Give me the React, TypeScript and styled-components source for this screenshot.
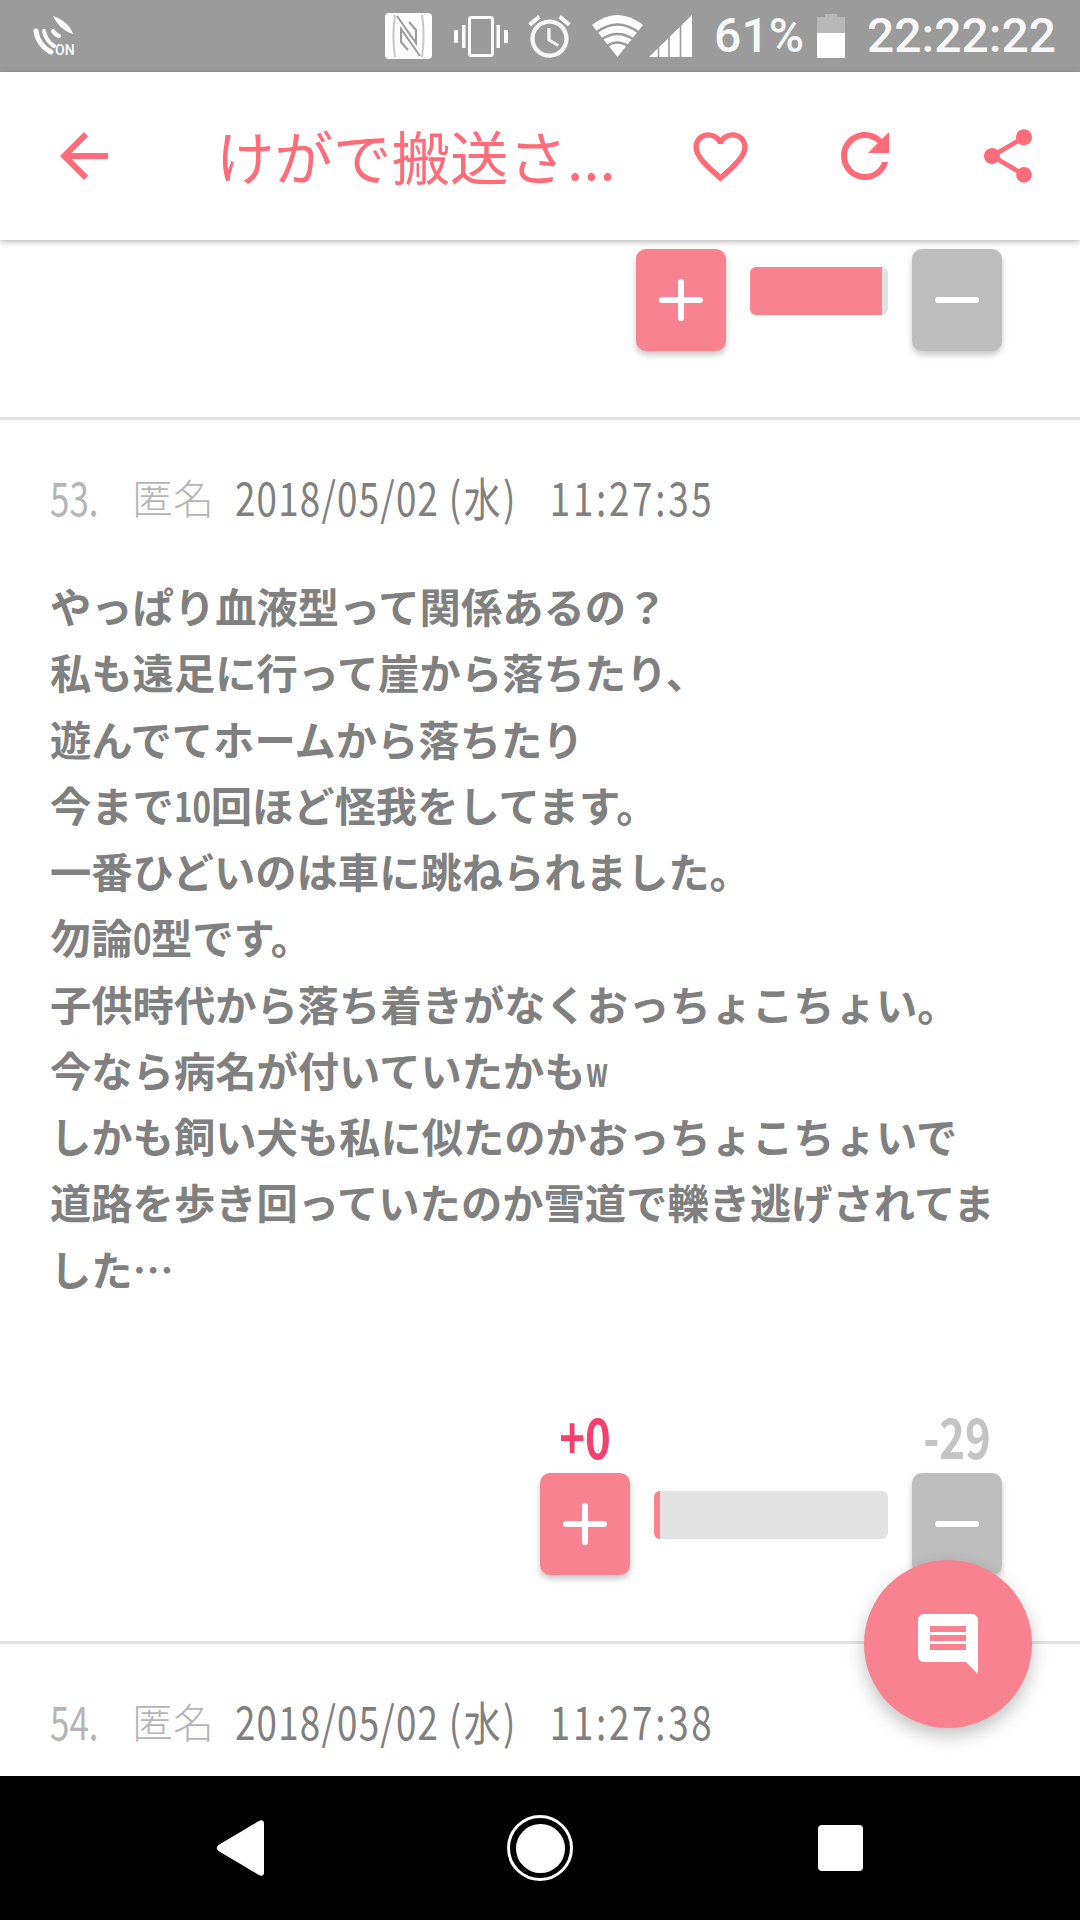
import styled, { createGlobalStyle } from "styled-components";
import { MdAccessAlarm, MdArrowBack, MdComment, MdFavoriteBorder, MdRefresh, MdShare } from "react-icons/md";

const PINK = "#f8828f";
const CORAL = "#ff6b78";
const FONT_STACK = `"Noto Sans CJK JP", sans-serif`;

const GlobalStyle = createGlobalStyle`
  html, body {
    margin: 0;
    padding: 0;
    background: #fff;
  }
  * {
    box-sizing: border-box;
  }
`

const Screen = styled.div`
  position: relative;
  width: 1080px;
  height: 1920px;
  display: flex;
  flex-direction: column;
  overflow: hidden;
  background: #fff;
`

const StatusBar = styled.div`
  height: 72px;
  flex-shrink: 0;
  background: #9b9b9b;
  color: #f7f7f7;
  display: flex;
  align-items: center;
  padding: 0 24px 0 33px;
`

const StatusRight = styled.div`
  margin-left: auto;
  display: flex;
  align-items: center;
`

const StatusText = styled.span<{ $left: number; $right: number }>`
  font-family: Roboto, sans-serif;
  font-size: 48px;
  font-weight: 500;
  line-height: 72px;
  margin-left: ${props => props.$left}px;
  margin-right: ${props => props.$right}px;
`

const StatusIcon = styled.svg<{ $left?: number }>`
  display: block;
  flex-shrink: 0;
  margin-left: ${props => props.$left ?? 0}px;
`

const OnLabel = styled.text`
  font-family: Roboto, sans-serif;
  font-size: 14px;
  font-weight: 500;
  fill: #fff;
`

const Header = styled.header`
  position: relative;
  z-index: 2;
  height: 168px;
  flex-shrink: 0;
  background: #fff;
  box-shadow: 0 2px 6px rgba(0, 0, 0, 0.28);
  color: ${CORAL};
  display: flex;
  align-items: center;
  padding: 0 40px 0 48px;
`

const Title = styled.h1`
  flex: 1;
  margin: 0 0 4px;
  padding-left: 96px;
  font-family: ${FONT_STACK};
  font-size: 58.5px;
  font-weight: 400;
  white-space: nowrap;
`

const Actions = styled.div`
  display: flex;
  align-items: center;
  gap: 75.5px;
`

const Thread = styled.main`
  flex: 1;
  overflow: hidden;
`

const Post = styled.article<{ $clipped?: boolean }>`
  padding: ${props => props.$clipped ? "9px 0 66px" : "46px 0 66px"};
  border-bottom: 3px solid #e2e2e2;
`

const LastPost = styled(Post)`
  border-bottom: none;
`

const Meta = styled.div`
  height: 60px;
  padding-left: 50px;
  display: flex;
  align-items: center;
  font-family: ${FONT_STACK};
  font-size: 46px;
  font-weight: 400;
  color: #808080;
`

// no narrow font is installed, so the thin latin runs are squeezed sideways
const Squeezed = styled.span<{ $scale: number; $trim?: number }>`
  display: inline-block;
  transform: scaleX(${props => props.$scale});
  transform-origin: left center;
  margin-right: ${props => props.$trim ?? 0}px;
  white-space: nowrap;
`

const PostNumber = styled(Squeezed)`
  color: #b5b5b5;
  width: 82px;
`

const Author = styled.span`
  color: #b5b5b5;
  font-size: 41px;
  font-weight: 300;
  width: 103px;
`

const DateLine = styled(Squeezed)`
  display: inline-flex;
  align-items: center;
`

const DatePart = styled.span`
  letter-spacing: 1.5px;
`

const Weekday = styled.span`
  margin: 0 40px 0 12px;
  letter-spacing: 3px;
`

const TimePart = styled.span`
  letter-spacing: 3.4px;
`

const Body = styled.p`
  margin: 46px 0 0;
  padding: 0 50px;
  font-family: ${FONT_STACK};
  font-size: 41.3px;
  font-weight: 700;
  line-height: 66.25px;
  color: #808080;
  white-space: pre-wrap;
`

const VoteRow = styled.div<{ $barWidth: number }>`
  display: grid;
  grid-template-columns: 90px ${props => props.$barWidth}px 90px;
  column-gap: 24px;
  justify-content: end;
  padding-right: 78px;
`

const VoteRowSpaced = styled(VoteRow)`
  margin-top: 112px;
`

const VoteCount = styled.div<{ $plus?: boolean }>`
  grid-column: ${props => props.$plus ? 1 : 3};
  grid-row: 1;
  height: 60px;
  text-align: center;
  transform: scaleX(0.78);
  font-family: ${FONT_STACK};
  font-size: 56px;
  font-weight: 700;
  line-height: 44px;
  color: ${props => props.$plus ? "#f5406f" : "#c4c4c4"};
`

const VoteButton = styled.button<{ $plus?: boolean }>`
  grid-column: ${props => props.$plus ? 1 : 3};
  grid-row: 2;
  width: 90px;
  height: 102px;
  padding: 0;
  border: none;
  border-radius: 10px;
  background: ${props => props.$plus ? PINK : "#bdbdbd"};
  box-shadow: 0 4px 6px rgba(0, 0, 0, 0.22);
  display: flex;
  align-items: center;
  justify-content: center;
`

const BarTrack = styled.div`
  grid-column: 2;
  grid-row: 2;
  height: 48px;
  margin-top: 18px;
  border-radius: 6px;
  overflow: hidden;
  background: #e2e2e2;
`

const BarFill = styled.div`
  height: 100%;
  background: ${PINK};
`

const Fab = styled.button`
  position: absolute;
  right: 48px;
  bottom: 192px;
  z-index: 3;
  width: 168px;
  height: 168px;
  padding: 0;
  border: none;
  border-radius: 50%;
  background: ${PINK};
  color: #fff;
  box-shadow: 0 8px 18px rgba(0, 0, 0, 0.24);
  display: flex;
  align-items: center;
  justify-content: center;
`

const NavBar = styled.nav`
  height: 144px;
  flex-shrink: 0;
  background: #000;
  display: grid;
  grid-template-columns: repeat(3, 300px);
  justify-content: center;
  align-items: center;
  justify-items: center;
`

const HomeRing = styled.div`
  width: 66px;
  height: 66px;
  border: 3px solid #fff;
  border-radius: 50%;
  display: flex;
  align-items: center;
  justify-content: center;
`

const HomeDot = styled.div`
  width: 49px;
  height: 49px;
  border-radius: 50%;
  background: #fff;
`

const RecentSquare = styled.div`
  width: 45px;
  height: 46px;
  border-radius: 4px;
  background: #fff;
`

function Glyph({ minus }: { minus?: boolean }) {
  return <svg width="44" height="42" viewBox="0 0 44 42">
    <line x1="3" y1="21" x2="41" y2="21" stroke="#fff" strokeWidth="6" strokeLinecap="round" />
    {!minus && <line x1="22" y1="3" x2="22" y2="39" stroke="#fff" strokeWidth="6" strokeLinecap="round" />}
  </svg>
}

function PostMeta({ num, time }: { num: number, time: string }) {
  return <Meta>
    <PostNumber $scale={0.76}>{num}.</PostNumber>
    <Author>匿名</Author>
    <DateLine $scale={0.8}>
      <DatePart>2018/05/02</DatePart>
      <Weekday>(水)</Weekday>
      <TimePart>{time}</TimePart>
    </DateLine>
  </Meta>
}

function CallIcon() {
  return <StatusIcon width="48" height="46" viewBox="0 0 48 46">
    <g transform="translate(0 3)">
      <path d="M20 0C29 3 37 9 40 18C30 15 24 8 20 0Z" fill="#fff" />
      <path d="M3 15C4 24 10 32 18 36" fill="none" stroke="#fff" strokeWidth="5" strokeLinecap="round" />
      <path d="M11 15C12 21 15 26 21 30" fill="none" stroke="#fff" strokeWidth="4" strokeLinecap="round" />
      <path d="M20 15C21 17 23 19 26 20" fill="none" stroke="#fff" strokeWidth="4" strokeLinecap="round" />
    </g>
    <OnLabel x="22" y="42">ON</OnLabel>
  </StatusIcon>
}

function NfcIcon() {
  return <StatusIcon width="47" height="46" viewBox="0 0 47 46">
    <rect width="47" height="46" rx="4" fill="#fff" />
    <g fill="none" strokeWidth="2">
      <path d="M10 2C8 15 8 31 10 44" stroke="#c8c8c8" />
      <path d="M37 2C39 15 39 31 37 44" stroke="#c8c8c8" />
      <path d="M12 3L31 30V17L24 9" stroke="#9b9b9b" />
      <path d="M35 43L16 16V29L23 37" stroke="#9b9b9b" />
    </g>
  </StatusIcon>
}

function VibrateIcon() {
  return <StatusIcon $left={22} width="54" height="41" viewBox="0 0 54 41">
    <rect x="0" y="14" width="4" height="13" fill="#fff" />
    <rect x="8" y="9" width="3.5" height="23" fill="#fff" />
    <rect x="15.5" y="1.5" width="23" height="38" rx="2" fill="none" stroke="#fff" strokeWidth="3" />
    <rect x="42.5" y="9" width="3.5" height="23" fill="#fff" />
    <rect x="50" y="14" width="4" height="13" fill="#fff" />
  </StatusIcon>
}

function WifiIcon() {
  return <StatusIcon $left={17} width="51" height="42" viewBox="0 0 51 42">
    <path d="M25.5 42L0 10Q25.5 -10 51 10Z" fill="#fff" />
    <g fill="none" stroke="#9b9b9b" strokeWidth="2.6">
      <path d="M5 17Q25.5 2 46 17" />
      <path d="M10 24Q25.5 14 41 24" />
      <path d="M15 31Q25.5 24 36 31" />
    </g>
  </StatusIcon>
}

function SignalIcon() {
  return <StatusIcon $left={6} width="43" height="42" viewBox="0 0 43 42">
    <path d="M0 42L43 0V42Z" fill="#fff" />
    <g stroke="#9b9b9b" strokeWidth="1.6">
      <line x1="9.5" y1="25" x2="9.5" y2="42" />
      <line x1="20" y1="15" x2="20" y2="42" />
      <line x1="31.5" y1="4" x2="31.5" y2="42" />
    </g>
  </StatusIcon>
}

function BatteryIcon() {
  return <StatusIcon width="28" height="44" viewBox="0 0 28 44">
    <path d="M8 0H20V3H28V19H0V3H8Z" fill="#b8b8b8" />
    <rect y="19" width="28" height="25" fill="#fff" />
  </StatusIcon>
}

function BackTriangle() {
  return <svg width="48" height="56" viewBox="0 0 48 56">
    <path d="M42 1.5L2.5 25Q-1 28 2.5 31L42 54.5Q48 58 48 52V4Q48 -2 42 1.5Z" fill="#fff" />
  </svg>
}

export default function App() {
  return <Screen>
    <GlobalStyle />
    <StatusBar>
      <CallIcon />
      <StatusRight>
        <NfcIcon />
        <VibrateIcon />
        <StatusIcon as={MdAccessAlarm} $left={16} size={51} />
        <WifiIcon />
        <SignalIcon />
        <StatusText $left={22} $right={13}>61%</StatusText>
        <BatteryIcon />
        <StatusText $left={22} $right={0}>22:22:22</StatusText>
      </StatusRight>
    </StatusBar>
    <Header>
      <MdArrowBack size={72} />
      <Title>けがで搬送さ...</Title>
      <Actions>
        <MdFavoriteBorder size={65} />
        <MdRefresh size={72} />
        <MdShare size={64} />
      </Actions>
    </Header>
    <Thread>
      <Post $clipped>
        <VoteRow $barWidth={138}>
          <VoteButton $plus><Glyph /></VoteButton>
          <BarTrack><BarFill style={{ width: "96%" }} /></BarTrack>
          <VoteButton><Glyph minus /></VoteButton>
        </VoteRow>
      </Post>
      <Post>
        <PostMeta num={53} time="11:27:35" />
        <Body>
          やっぱり血液型って関係あるの？{"\n"}
          私も遠足に行って崖から落ちたり、{"\n"}
          遊んでてホームから落ちたり{"\n"}
          今まで<Squeezed $scale={0.76} $trim={-12}>10</Squeezed>回ほど怪我をしてます。{"\n"}
          一番ひどいのは車に跳ねられました。{"\n"}
          勿論<Squeezed $scale={0.76} $trim={-6}>0</Squeezed>型です。{"\n"}
          子供時代から落ち着きがなくおっちょこちょい。{"\n"}
          今なら病名が付いていたかも<Squeezed $scale={0.62} $trim={-11}>w</Squeezed>{"\n"}
          しかも飼い犬も私に似たのかおっちょこちょいで{"\n"}
          道路を歩き回っていたのか雪道で轢き逃げされてました…
        </Body>
        <VoteRowSpaced $barWidth={234}>
          <VoteCount $plus>+0</VoteCount>
          <VoteCount>-29</VoteCount>
          <VoteButton $plus><Glyph /></VoteButton>
          <BarTrack><BarFill style={{ width: "6px" }} /></BarTrack>
          <VoteButton><Glyph minus /></VoteButton>
        </VoteRowSpaced>
      </Post>
      <LastPost>
        <PostMeta num={54} time="11:27:38" />
      </LastPost>
    </Thread>
    <Fab><MdComment size={72} /></Fab>
    <NavBar>
      <BackTriangle />
      <HomeRing><HomeDot /></HomeRing>
      <RecentSquare />
    </NavBar>
  </Screen>
}
